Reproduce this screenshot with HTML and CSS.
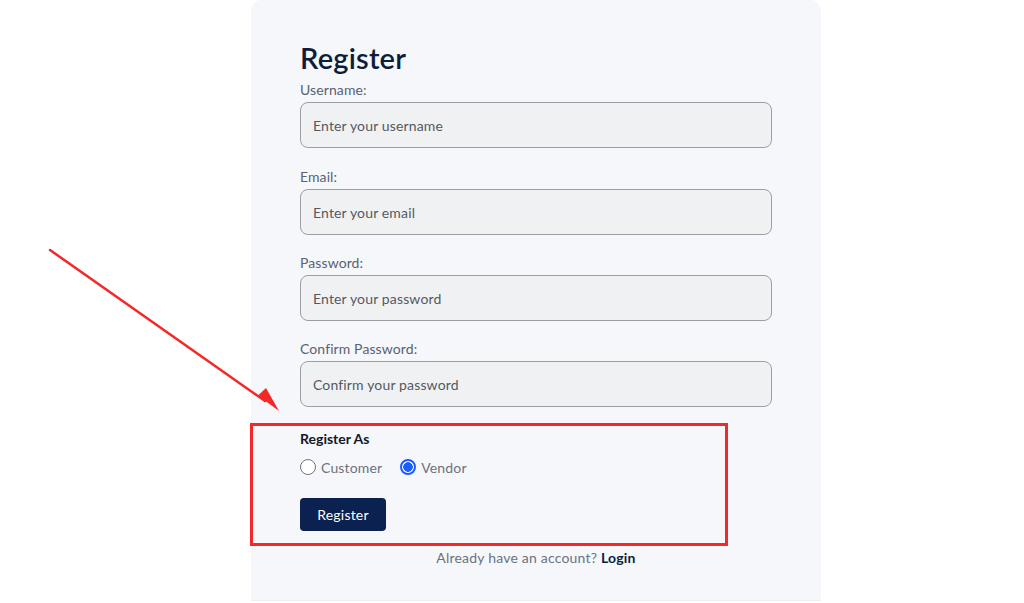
FILE: index.html
```html
<!DOCTYPE html>
<html>
<head>
<meta charset="utf-8">
<link rel="stylesheet" href="styles.css">
</head>
<body>
<div class="page">
  <div class="card">
    <h1 class="title">Register</h1>
    <form class="form">
      <div class="group">
        <label class="label">Username:</label>
        <input class="input" type="text" placeholder="Enter your username">
      </div>
      <div class="group">
        <label class="label">Email:</label>
        <input class="input" type="email" placeholder="Enter your email">
      </div>
      <div class="group">
        <label class="label">Password:</label>
        <input class="input" type="password" placeholder="Enter your password">
      </div>
      <div class="group">
        <label class="label">Confirm Password:</label>
        <input class="input" type="password" placeholder="Confirm your password">
      </div>
      <div class="role-title">Register As</div>
      <div class="radios">
        <label class="radio-item"><input class="radio" type="radio" name="role"> Customer</label>
        <label class="radio-item"><input class="radio" type="radio" name="role" checked> Vendor</label>
      </div>
      <button class="btn" type="button">Register</button>
    </form>
    <p class="footer-text">Already have an account? <a class="login" href="#">Login</a></p>
  </div>
  <div class="highlight"></div>
  <svg class="arrow" width="300" height="430" viewBox="0 0 300 430">
    <line x1="50" y1="250" x2="265" y2="401" stroke="#f42828" stroke-width="2.5" stroke-linecap="round"/>
    <polygon points="279,411 258,395.5 266,388" fill="#f42828"/>
  </svg>
</div>
</body>
</html>
```

FILE: styles.css
```css
* { box-sizing: border-box; }
html, body { margin: 0; padding: 0; background: #ffffff; }
body { font-family: Lato, "Noto Sans", sans-serif; color: #1a2233; }

.page {
  position: relative;
  width: 1024px;
  height: 603px;
  overflow: hidden;
  padding-left: 251px;
}

.card {
  width: 570px;
  min-height: 601px;
  background: #f5f7fb;
  border-radius: 10px 10px 0 0;
  padding: 35px 49px 0 49px;
  border-bottom: 1px solid #eceef2;
}

.title {
  margin: 0;
  font-size: 29px;
  line-height: 45px;
  font-weight: 600;
  color: #0e1d3a;
  letter-spacing: 0.2px;
}

.form { display: flex; flex-direction: column; }

.group { display: flex; flex-direction: column; margin-bottom: 18px; }
.group:first-child { margin-bottom: 19px; }

.label {
  font-size: 14px;
  line-height: 20px;
  color: #596273;
  margin-bottom: 2px;
  letter-spacing: 0.1px;
}

.input {
  height: 46px;
  width: 472px;
  border: 1px solid #9a9ea5;
  border-radius: 8px;
  background: #f0f1f3;
  padding: 0 12px;
  font-family: inherit;
  font-size: 14px;
  color: #333;
  outline: none;
  letter-spacing: 0.15px;
}
.input::placeholder { color: #55595f; }

.role-title {
  margin-top: 4px;
  font-size: 14px;
  line-height: 20px;
  font-weight: 700;
  color: #111827;
}

.radios {
  display: flex;
  gap: 18px;
  margin-top: 8px;
  height: 20px;
  align-items: center;
}
.radio-item {
  display: flex;
  align-items: center;
  gap: 5px;
  font-size: 14px;
  color: #6b7280;
  letter-spacing: 0.15px;
}
.radio {
  appearance: none;
  -webkit-appearance: none;
  margin: 0;
  width: 16px;
  height: 16px;
  border: 1px solid #767676;
  border-radius: 50%;
  background: #fff;
  display: inline-block;
}
.radio:checked {
  border: 2px solid #1a5cff;
  background: radial-gradient(circle, #1a5cff 0 4.5px, #fff 5px);
}

.btn {
  align-self: flex-start;
  margin-top: 21px;
  height: 33px;
  width: 86px;
  border: none;
  border-radius: 4px;
  background: #0b2150;
  color: #fff;
  font-family: inherit;
  font-size: 14px;
  letter-spacing: 0.2px;
}

.footer-text {
  margin: 17px 0 0 0;
  text-align: center;
  font-size: 14px;
  line-height: 20px;
  color: #6b7280;
  letter-spacing: 0.2px;
}
.login { color: #0e1d3a; font-weight: 700; text-decoration: none; }

.highlight {
  position: absolute;
  left: 250px;
  top: 423px;
  width: 478px;
  height: 123px;
  border: 3px solid #f42828;
}

.arrow {
  position: absolute;
  left: 0;
  top: 0;
}
```
